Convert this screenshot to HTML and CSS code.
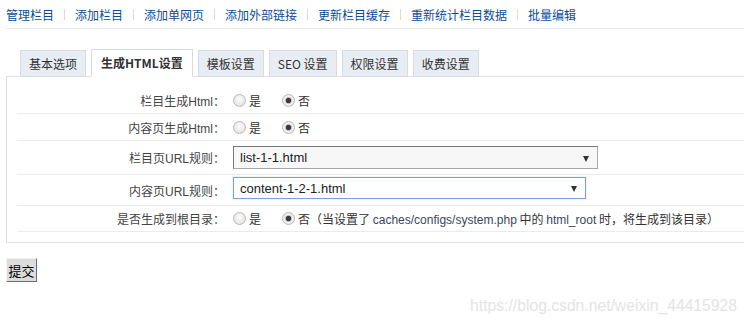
FILE: index.html
```html
<!DOCTYPE html>
<html lang="zh-CN">
<head>
<meta charset="utf-8">
<title>栏目管理</title>
<link rel="stylesheet" href="styles.css">
</head>
<body>
<nav class="subnav">
  <a href="#">管理栏目</a><span class="sep"></span>
  <a href="#">添加栏目</a><span class="sep"></span>
  <a href="#">添加单网页</a><span class="sep"></span>
  <a href="#">添加外部链接</a><span class="sep"></span>
  <a href="#">更新栏目缓存</a><span class="sep"></span>
  <a href="#">重新统计栏目数据</a><span class="sep sep-warm"></span>
  <a href="#">批量编辑</a>
</nav>

<div class="tabs">
  <span class="tab">基本选项</span>
  <span class="tab active">生成HTML设置</span>
  <span class="tab">模板设置</span>
  <span class="tab">SEO 设置</span>
  <span class="tab">权限设置</span>
  <span class="tab">收费设置</span>
</div>

<div class="panel">
  <div class="row r1">
    <label class="lbl">栏目生成Html：</label>
    <div class="field">
      <input type="radio" class="rd" name="ishtml"><span class="opt">是</span>
      <input type="radio" class="rd" name="ishtml" checked><span class="opt">否</span>
    </div>
  </div>
  <div class="row r2">
    <label class="lbl">内容页生成Html：</label>
    <div class="field">
      <input type="radio" class="rd" name="content_ishtml"><span class="opt">是</span>
      <input type="radio" class="rd" name="content_ishtml" checked><span class="opt">否</span>
    </div>
  </div>
  <div class="row r3">
    <label class="lbl">栏目页URL规则：</label>
    <div class="field">
      <span class="selwrap sel1"><select class="sel"><option>list-1-1.html</option></select></span>
    </div>
  </div>
  <div class="row r4">
    <label class="lbl">内容页URL规则：</label>
    <div class="field">
      <span class="selwrap sel2"><select class="sel"><option>content-1-2-1.html</option></select></span>
    </div>
  </div>
  <div class="row r5">
    <label class="lbl">是否生成到根目录：</label>
    <div class="field">
      <input type="radio" class="rd" name="create_to_html_root"><span class="opt">是</span>
      <input type="radio" class="rd" name="create_to_html_root" checked><span class="opt">否</span><span class="note">（当设置了 <span class="en">caches/configs/system.php</span> 中的 <span class="en">html_root</span> 时，将生成到该目录）</span>
    </div>
  </div>
</div>

<div class="actions">
  <button class="submit" type="button">提交</button>
</div>

<div class="watermark">https://blog.csdn.net/weixin_44415928</div>
</body>
</html>
```

FILE: styles.css
```css
html {
  overflow: hidden;
}
body {
  margin: 0;
  padding: 0 6px;
  font-family: "Liberation Sans", "Noto Sans CJK SC", sans-serif;
  font-size: 12px;
  color: #333;
  background: #fff;
  position: relative;
  min-height: 328px;
}

/* top sub navigation */
.subnav {
  display: flex;
  align-items: center;
  height: 29px;
  padding-top: 1px;
  box-sizing: border-box;
  border-bottom: 1px solid #e6e8ec;
  margin-right: -6px;
  font-family: "Noto Sans CJK SC", sans-serif;
}
.subnav a {
  color: #0b4d9b;
  text-decoration: none;
  line-height: 14px;
}
.sep {
  width: 1px;
  height: 11px;
  background: #dadada;
  margin: 0 10px 0 10px;
}
.sep-warm {
  background: #eadccd;
}

/* tabs */
.tabs {
  display: flex;
  align-items: flex-end;
  gap: 5px;
  margin-top: 20px;
  margin-bottom: -1px;
  padding-left: 14px;
  height: 28px;
  position: relative;
  z-index: 1;
  font-family: "Noto Sans CJK SC", sans-serif;
}
.tab {
  box-sizing: border-box;
  height: 27px;
  line-height: 25px;
  padding: 0 8px;
  background: #e8ecf3;
  border: 1px solid #d6dce6;
  color: #333;
}
.tab.active {
  height: 28px;
  line-height: 26px;
  background: #fff;
  border-color: #d6dce6;
  border-bottom-color: #fff;
  font-weight: bold;
  color: #333;
  padding: 0 9px;
}

/* form panel */
.panel {
  border: 1px solid #dde1e7;
  border-right: none;
  margin-right: -40px;
  padding: 10px 0 10px 10px;
}
.row {
  display: flex;
  align-items: center;
  border-bottom: 1px solid #ebebeb;
}
.r1, .r2 { height: 26px; }
.r3 { height: 33px; }
.r4 { height: 30px; }
.r5 { height: 25px; }

.lbl {
  width: 208px;
  text-align: right;
  color: #444;
  flex: none;
}
.field {
  display: flex;
  align-items: center;
  padding-left: 8px;
}

/* radio buttons */
.rd {
  -webkit-appearance: none;
  appearance: none;
  margin: 0;
  width: 13px;
  height: 13px;
  border-radius: 50%;
  border: 1px solid #b9b9b9;
  box-sizing: border-box;
  background: radial-gradient(circle at 50% 40%, #fdfdfd 0, #e9e9e9 60%, #dcdcdc 100%);
  flex: none;
}
.rd:checked {
  background: radial-gradient(circle, #3a3a3a 0, #3a3a3a 2.3px, #bdbdbd 3px, #f2f2f2 4px, #e4e4e4 100%);
}
.opt {
  margin-left: 3px;
  color: #333;
  font-family: "Noto Sans CJK SC", sans-serif;
}
.opt + .rd {
  margin-left: 21px;
}
.note {
  color: #333;
  font-family: "Noto Sans CJK SC", sans-serif;
}
.note .en {
  font-family: "Liberation Sans", sans-serif;
  color: #3c4660;
}

/* selects */
.selwrap {
  position: relative;
  display: block;
}
.sel {
  -webkit-appearance: none;
  appearance: none;
  box-sizing: border-box;
  margin: 0;
  font-family: "Liberation Sans", sans-serif;
  font-size: 13px;
  color: #222;
  padding: 0 0 0 6px;
  border-radius: 0;
  outline: none;
}
.sel1 .sel {
  width: 365px;
  height: 23px;
  background: #f7f7f7;
  border: 1px solid #a9a9a9;
  border-top-color: #767676;
  border-left-color: #767676;
}
.sel2 {
  margin-bottom: 4px;
}
.sel2 .sel {
  width: 353px;
  height: 22px;
  background: #fff;
  border: 1px solid #7c9fd6;
  box-shadow: 0 0 1px #a9c2ea;
}
.selwrap::after {
  content: "";
  position: absolute;
  right: 9px;
  top: 50%;
  margin-top: -2px;
  border-left: 3.5px solid transparent;
  border-right: 3.5px solid transparent;
  border-top: 6px solid #333;
}

/* submit */
.actions {
  margin-top: 15px;
}
.submit {
  box-sizing: border-box;
  width: 31px;
  height: 24px;
  margin: 0;
  padding: 0;
  font-family: "Noto Sans CJK SC", sans-serif;
  font-size: 13px;
  color: #000;
  background: #dcdcdc;
  border: 1px solid;
  border-color: #f4f4f4 #6d6d6d #6d6d6d #f4f4f4;
  border-radius: 0;
}

/* watermark overlay */
.watermark {
  position: absolute;
  right: 7px;
  top: 297px;
  font-family: "Liberation Sans", sans-serif;
  font-size: 15.7px;
  color: #e4e4e4;
  white-space: nowrap;
}
```
